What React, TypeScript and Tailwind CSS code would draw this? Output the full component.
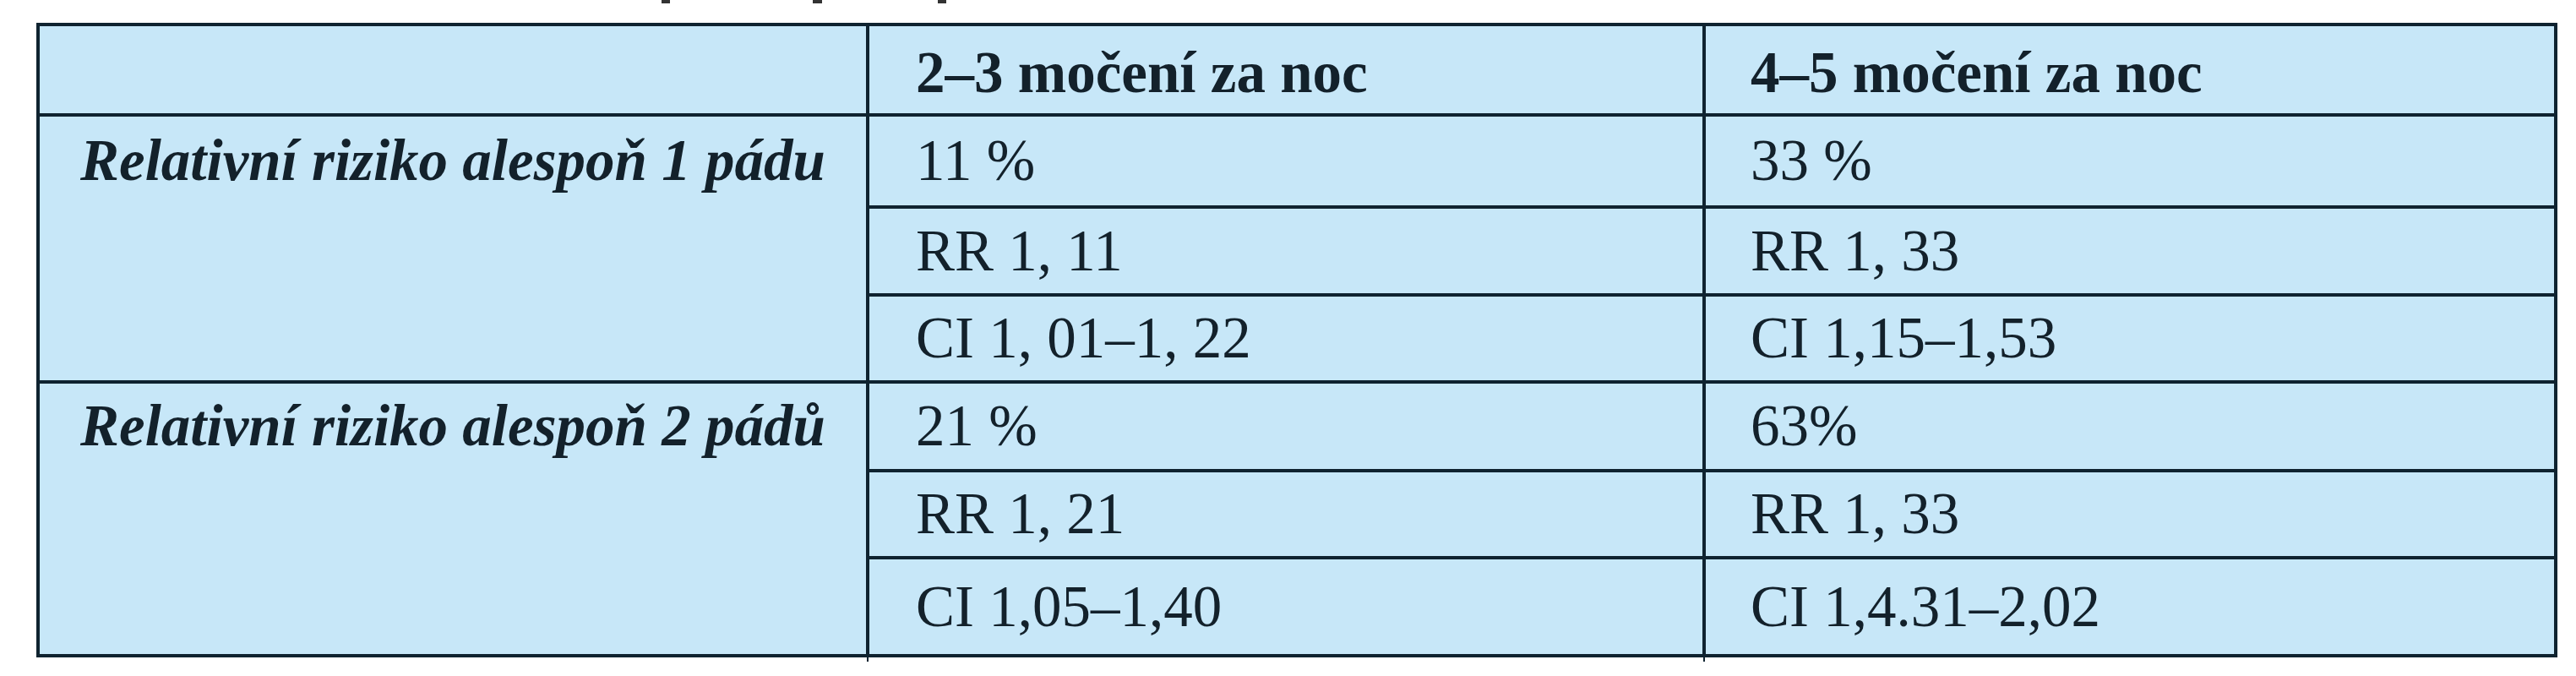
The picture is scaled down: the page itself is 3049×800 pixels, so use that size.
import { Fragment } from "react";

const ROWS = [
  {
    label: "Relativní riziko alespoň 1 pádu",
    cells: [
      ["11 %", "33 %"],
      ["RR 1, 11", "RR 1, 33"],
      ["CI 1, 01–1, 22", "CI 1,15–1,53"],
    ],
  },
  {
    label: "Relativní riziko alespoň 2 pádů",
    cells: [
      ["21 %", "63%"],
      ["RR 1, 21", "RR 1, 33"],
      ["CI 1,05–1,40", "CI 1,4.31–2,02"],
    ],
  },
];

const cellBase = "bg-[#c7e7f8] flex items-center leading-none";

export default function App() {
  return (
    <div
      className="w-[3049px] h-[800px] bg-white text-[#13212b] text-[69px]"
      style={{ fontFamily: '"Liberation Serif", "Times New Roman", serif' }}
    >
      {/* cut-off caption line above the table */}
      <div className="flex h-[27px] items-start">
        <span className="ml-[783px] h-[4px] w-[10px] bg-[#333]" />
        <span className="ml-[169px] h-[4px] w-[11px] bg-[#333]" />
        <span className="ml-[137px] h-[4px] w-[10px] bg-[#333]" />
      </div>

      <div className="ml-[43px] w-[2984px] grid grid-cols-[978px_986px_1004px] grid-rows-[103px_105px_100px_99px_101px_99px_112px] gap-[4px] p-[4px] bg-[#0f2330]">
        <div className={cellBase} />
        <div className={`${cellBase} pl-[55px] pt-[7px] font-bold`}>2–3 močení za noc</div>
        <div className={`${cellBase} pl-[53px] pt-[7px] font-bold`}>4–5 močení za noc</div>

        {ROWS.map((group, gi) => (
          <Fragment key={gi}>
            <div className="row-span-3 bg-[#c7e7f8] flex flex-col">
              <div
                className={`${gi === 0 ? "h-[105px]" : "h-[101px]"} flex items-center pl-[48px] leading-none font-bold italic`}
              >
                {group.label}
              </div>
            </div>
            {group.cells.map(([a, b], ri) => (
              <Fragment key={ri}>
                <div className={`${cellBase} pl-[55px]`}>{a}</div>
                <div className={`${cellBase} pl-[53px]`}>{b}</div>
              </Fragment>
            ))}
          </Fragment>
        ))}
      </div>

      {/* small ticks of the column rules under the bottom border */}
      <div className="flex h-[5px]">
        <span className="ml-[1026px] w-[2px] bg-[#0f2330]" />
        <span className="ml-[988px] w-[2px] bg-[#0f2330]" />
      </div>
    </div>
  );
}
